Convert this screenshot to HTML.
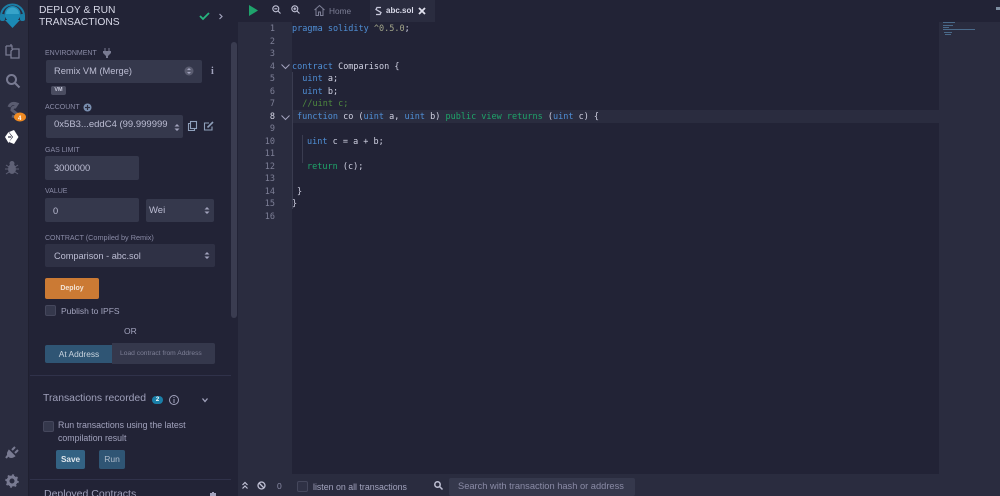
<!DOCTYPE html>
<html><head><meta charset="utf-8"><style>
html,body{margin:0;padding:0;width:1000px;height:496px;overflow:hidden;background:#222336}
body{position:relative;font-family:"Liberation Sans",sans-serif;color:#a2a3bd}
.a{position:absolute;white-space:nowrap}
.box{position:absolute;background:#35384c;border-radius:2px}
.l{position:absolute;font-size:7px;color:#8a8ba6;white-space:nowrap;line-height:10px}
.t{position:absolute;font-size:9.300px;color:#bcbdd3;white-space:nowrap;line-height:12px}
.code{position:absolute;left:292px;font:8.5px/12.53px "DejaVu Sans Mono","Liberation Mono",monospace;color:#d0d1e2;white-space:pre}
.n{position:absolute;left:240px;width:35px;text-align:right;font:8.5px/12.53px "DejaVu Sans Mono","Liberation Mono",monospace;color:#7d7f96}
.k{color:#4f8fd6}.g{color:#1fa56a}.c{color:#4f8a3f}.o{color:#a3a68a}
svg{position:absolute;overflow:visible}
</style></head><body>
<!-- icon panel -->
<div class="a" style="left:0;top:0;width:28px;height:496px;background:#2a2c3f;border-right:1px solid #1f2030"></div>
<svg style="left:0;top:0" width="28" height="30"><path d="M1 16 A11 11 0 0 1 24 16" fill="none" stroke="#1b7fa8" stroke-width="2"/><circle cx="12.5" cy="14" r="8" fill="#1b8ab5"/><path d="M6 14 A6.500 6.500 0 0 1 19 14 Z" fill="#37a3c9"/><path d="M5 20 H20 L12.500 28 Z" fill="#1b8ab5"/><rect x="0" y="14" width="5" height="7" rx="2" fill="#1b7fa8"/><rect x="20" y="14" width="5" height="7" rx="2" fill="#1b7fa8"/></svg>
<svg style="left:5px;top:43px" width="16" height="16" fill="none" stroke="#797b92" stroke-width="1.300"><path d="M1 3 H7 V6 M6 1 V3 M1 3 V12 H6"/><path d="M8 6 H14 V15 H6 V8 Z"/></svg>
<svg style="left:5px;top:73px" width="16" height="16" fill="none" stroke="#797b92" stroke-width="2"><circle cx="6.500" cy="6.500" r="4.500"/><path d="M10 10 L14.500 14.500"/></svg>
<svg style="left:7px;top:101px" width="20" height="24"><path d="M2 6 Q4 1 10 3 L8 6 Q5 6 5 9 L10 13 Q11 17 5 15" fill="none" stroke="#5a5c70" stroke-width="3"/><ellipse cx="13" cy="16" rx="6" ry="4.500" fill="#ef8a22"/><text x="11" y="19" font-size="6" font-weight="700" fill="#fff" font-family="Liberation Sans">4</text></svg>
<svg style="left:4px;top:129px" width="16" height="18"><path d="M5 3 L10 1 L14.500 8 L10 15 L5 13 L9 8 Z" fill="#fff"/><path d="M1 8 L4.500 3 L8 8 L4.500 14 Z" fill="#fff"/><path d="M4 8 L7 8" stroke="#2a2c3f" stroke-width="1.200"/></svg>
<svg style="left:5px;top:160px" width="14" height="15" fill="#5f6176"><ellipse cx="7" cy="9" rx="4" ry="5"/><circle cx="7" cy="3.500" r="2.500"/><path d="M1 5 L4 7 M13 5 L10 7 M0 9 H3 M14 9 H11 M1 14 L4 12 M13 14 L10 12" stroke="#5f6176" stroke-width="1"/></svg>
<svg style="left:5px;top:445px" width="14" height="14" fill="none" stroke="#797b92" stroke-width="2"><path d="M1 13 L4 9" /><path d="M4 6 L9 11 Q6 13 4 11 Q2 9 4 6 Z" fill="#797b92"/><path d="M7 5 L10 2 M10 8 L13 5" /></svg>
<svg style="left:5px;top:474px" width="14" height="14"><circle cx="7" cy="7" r="4" fill="none" stroke="#797b92" stroke-width="3"/><circle cx="7" cy="7" r="6" fill="none" stroke="#797b92" stroke-width="1.500" stroke-dasharray="2 2.700"/></svg>

<!-- side panel -->
<div class="a" style="left:39px;top:5px;font-size:10.300px;line-height:12px;color:#d8d9e8">DEPLOY &amp; RUN<br>TRANSACTIONS</div>
<svg style="left:199px;top:12px" width="24" height="9" fill="none"><path d="M1 4 L4 7 L10 1" stroke="#26b57e" stroke-width="1.800"/><path d="M20.500 2 L23 4.500 L20.500 7" stroke="#a2a3bd" stroke-width="1.200"/></svg>
<div class="a" style="left:231px;top:42px;width:6px;height:276px;background:#3a3c50;border-radius:3px"></div>

<div class="l" style="left:45px;top:49px">ENVIRONMENT</div>
<svg style="left:103px;top:48px" width="9" height="10" fill="#797b92"><path d="M2 0 V3 M6 0 V3" stroke="#797b92"/><path d="M0 3 H8 V5 L5 8 V10 H3 V8 L0 5 Z"/></svg>
<div class="box" style="left:46px;top:60px;width:156px;height:23px"></div>
<div class="t" style="left:54px;top:65px">Remix VM (Merge)</div>
<svg style="left:184px;top:66px" width="10" height="10"><circle cx="5" cy="5" r="4.500" fill="#5a5c70"/><path d="M3 4 L5 2 L7 4 Z M3 6 L5 8 L7 6 Z" fill="#a2a3bd"/></svg>
<div class="a" style="left:211px;top:66px;font:700 10px/12px 'Liberation Serif',serif;color:#a2a3bd">i</div>
<div class="a" style="left:51px;top:86px;width:15px;height:9px;background:#4a4c60;border-radius:2px;font:700 5.500px/9px 'Liberation Sans',sans-serif;color:#c8c9dc;text-align:center">VM</div>

<div class="l" style="left:45px;top:103px">ACCOUNT</div>
<svg style="left:83px;top:103px" width="9" height="9"><circle cx="4.500" cy="4.500" r="4" fill="#7a8fb0"/><path d="M4.500 2 V7 M2 4.500 H7" stroke="#2a2c3f" stroke-width="1.200"/></svg>
<div class="box" style="left:46px;top:115px;width:137px;height:23px"></div>
<div class="t" style="left:54px;top:119px;width:115px;overflow:hidden;font-size:9.500px">0x5B3...eddC4 (99.999999</div>
<svg style="left:174px;top:123px" width="6" height="9" fill="#a2a3bd"><path d="M0.500 3.500 L3 1 L5.500 3.500 Z M0.500 5.500 L3 8 L5.500 5.500 Z"/></svg>
<svg style="left:188px;top:121px" width="9" height="10" fill="none" stroke="#8fa0bb" stroke-width="1.100"><rect x="2.500" y="0.500" width="6" height="7"/><path d="M2.500 2.500 H0.500 V9.500 H6.500 V7.500"/></svg>
<svg style="left:204px;top:121px" width="10" height="10" fill="none" stroke="#8fa0bb" stroke-width="1.100"><path d="M8 5.500 V9 H0.500 V2 H5"/><path d="M3.500 6.500 L9 1" stroke-width="1.600"/></svg>

<div class="l" style="left:45px;top:146px">GAS LIMIT</div>
<div class="box" style="left:45px;top:156px;width:94px;height:24px"></div>
<div class="t" style="left:54px;top:162px">3000000</div>

<div class="l" style="left:45px;top:187px">VALUE</div>
<div class="box" style="left:45px;top:198px;width:94px;height:24px"></div>
<div class="t" style="left:53px;top:205px">0</div>
<div class="box" style="left:146px;top:199px;width:68px;height:23px"></div>
<div class="t" style="left:149px;top:205px;font-size:9.500px">Wei</div>
<svg style="left:204px;top:206px" width="6" height="9" fill="#a2a3bd"><path d="M0.500 3.500 L3 1 L5.500 3.500 Z M0.500 5.500 L3 8 L5.500 5.500 Z"/></svg>

<div class="l" style="left:45px;top:233px;font-size:7px">CONTRACT <span style="font-size:7.300px">(Compiled by Remix)</span></div>
<div class="box" style="left:45px;top:244px;width:170px;height:23px;background:#2f3145"></div>
<div class="t" style="left:54px;top:250px;font-size:9.200px">Comparison - abc.sol</div>
<svg style="left:204px;top:251px" width="6" height="9" fill="#a2a3bd"><path d="M0.500 3.500 L3 1 L5.500 3.500 Z M0.500 5.500 L3 8 L5.500 5.500 Z"/></svg>

<div class="a" style="left:45px;top:278px;width:54px;height:21px;background:#cb7a34;border-radius:2px;font:700 7px/21px 'Liberation Sans',sans-serif;color:#f3e3d3;text-align:center">Deploy</div>
<div class="a" style="left:45px;top:305px;width:9px;height:9px;background:#35384c;border:1px solid #45475c;border-radius:2px"></div>
<div class="t" style="left:61px;top:305px;font-size:8.500px;color:#a2a3bd">Publish to IPFS</div>
<div class="t" style="left:124px;top:325px;font-size:8.500px;color:#a2a3bd">OR</div>

<div class="a" style="left:45px;top:345px;width:68px;height:18px;background:#2f5574;border-radius:2px 0 0 2px;font:8.400px/18px 'Liberation Sans',sans-serif;color:#c8d3de;text-align:center">At Address</div>
<div class="a" style="left:112px;top:343px;width:103px;height:21px;background:#35384c;border-radius:0 2px 2px 0;font:6.700px/21px 'Liberation Sans',sans-serif;color:#7d7f96;text-indent:8px">Load contract from Address</div>

<div class="a" style="left:30px;top:375px;width:201px;height:1px;background:#30324a"></div>
<div class="a" style="left:43px;top:393px;font-size:10.400px;line-height:12px;color:#9fa0ba">Transactions recorded</div>
<div class="a" style="left:152px;top:396px;width:11px;height:8px;background:#1a7fa8;border-radius:5px;font:700 6px/8px 'Liberation Sans',sans-serif;color:#fff;text-align:center">2</div>
<svg style="left:169px;top:395px" width="11" height="11" fill="none" stroke="#a2a3bd"><circle cx="5" cy="5" r="4.500"/><path d="M5 4 V8 M5 2 V3"/></svg>
<svg style="left:202px;top:398px" width="6" height="5" fill="none" stroke="#a2a3bd" stroke-width="1.300"><path d="M0.500 0.500 L3 3.500 L5.500 0.500"/></svg>

<div class="a" style="left:43px;top:421px;width:9px;height:9px;background:#35384c;border:1px solid #45475c;border-radius:2px"></div>
<div class="t" style="left:58px;top:419px;font-size:8.800px;line-height:13px;color:#a2a3bd">Run transactions using the latest<br>compilation result</div>
<div class="a" style="left:56px;top:450px;width:29px;height:19px;background:#336283;border-radius:2px;font:700 8.200px/19px 'Liberation Sans',sans-serif;color:#e0e6ec;text-align:center">Save</div>
<div class="a" style="left:99px;top:450px;width:26px;height:19px;background:#2f5574;border-radius:2px;font:8.500px/18px 'Liberation Sans',sans-serif;color:#b0bccb;text-align:center">Run</div>
<div class="a" style="left:30px;top:479px;width:201px;height:1px;background:#30324a"></div>
<div class="a" style="left:44px;top:488px;font-size:10.500px;line-height:12px;color:#9fa0ba">Deployed Contracts</div>
<svg style="left:209px;top:492px" width="8" height="4" fill="#a2a3bd"><path d="M1 1 H7 V4 H1 Z M3 0 H5 V1 H3 Z"/></svg>

<!-- top bar -->
<div class="a" style="left:238px;top:0;width:762px;height:22px;background:#222336"></div>
<svg style="left:249px;top:5px" width="9" height="11"><path d="M0 0 L9 5.500 L0 11 Z" fill="#1fa36c"/></svg>
<svg style="left:272px;top:5px" width="9" height="9" fill="none" stroke="#c0c1d5" stroke-width="1.100"><circle cx="3.800" cy="3.800" r="3"/><path d="M6 6 L8.500 8.500 M2.300 3.800 H5.300"/></svg>
<svg style="left:291px;top:5px" width="9" height="9" fill="none" stroke="#c0c1d5" stroke-width="1.100"><circle cx="3.800" cy="3.800" r="3"/><path d="M6 6 L8.500 8.500 M2.300 3.800 H5.300 M3.800 2.300 V5.300"/></svg>
<svg style="left:314px;top:5px" width="11" height="11" fill="none" stroke="#7d7f96"><path d="M0.500 5 L5.500 0.500 L10.500 5 M2 4 V10.500 H4.500 V7 H6.500 V10.500 H9 V4"/></svg>
<div class="a" style="left:329px;top:5px;font-size:8.300px;line-height:12px;color:#7d7f96">Home</div>
<div class="a" style="left:370px;top:0;width:65px;height:22px;background:#2a2c3f"></div>
<svg style="left:375px;top:6px" width="7" height="10" fill="none" stroke="#c8c9dc" stroke-width="1.300"><path d="M6 1.500 H2 L1 3.500 L6 6.500 L5 8.500 H1"/></svg>
<div class="a" style="left:386px;top:5px;font:700 8px/12px 'Liberation Sans',sans-serif;color:#d8d9e8">abc.sol</div>
<svg style="left:418px;top:7px" width="8" height="8" stroke="#e0e1ee" stroke-width="1.800"><path d="M1 1 L7 7 M7 1 L1 7"/></svg>
<div class="a" style="left:996px;top:7px;width:4px;height:3px;background:#7d8da0"></div>

<!-- editor -->
<div class="a" style="left:238px;top:22px;width:54px;height:452px;background:#2a2c3f"></div>
<div class="a" style="left:292px;top:22px;width:647px;height:452px;background:#222336"></div>
<div class="a" style="left:939px;top:22px;width:61px;height:452px;background:#2a2c3f"></div>
<div class="a" style="left:292px;top:110px;width:647px;height:12.500px;background:#2a2c3f"></div>
<div class="a" style="left:292px;top:72px;width:1px;height:137px;background:#3a3c50"></div>
<div class="a" style="left:302px;top:135px;width:1px;height:28px;background:#3a3c50"></div>

<div class="n" style="top:23px">1</div><div class="n" style="top:35.500px">2</div><div class="n" style="top:48px">3</div><div class="n" style="top:60.600px">4</div><div class="n" style="top:73.100px">5</div><div class="n" style="top:85.700px">6</div><div class="n" style="top:98.200px">7</div><div class="n" style="top:110.700px;color:#d8d9e8">8</div><div class="n" style="top:123.200px">9</div><div class="n" style="top:135.800px">10</div><div class="n" style="top:148.300px">11</div><div class="n" style="top:160.800px">12</div><div class="n" style="top:173.400px">13</div><div class="n" style="top:185.900px">14</div><div class="n" style="top:198.400px">15</div><div class="n" style="top:211px">16</div>
<svg style="left:281px;top:64px" width="9" height="5" fill="none" stroke="#a2a3bd"><path d="M0.500 0.500 L4.500 4.500 L8.500 0.500"/></svg>
<svg style="left:281px;top:115px" width="9" height="5" fill="none" stroke="#a2a3bd"><path d="M0.500 0.500 L4.500 4.500 L8.500 0.500"/></svg>

<div class="code" style="top:23px"><span class="k">pragma solidity</span> <span class="o">^0.5.0</span>;</div>
<div class="code" style="top:60.600px"><span class="k">contract</span> Comparison {</div>
<div class="code" style="top:73.100px">  <span class="k">uint</span> a;</div>
<div class="code" style="top:85.700px">  <span class="k">uint</span> b;</div>
<div class="code" style="top:98.200px">  <span class="c">//uint c;</span></div>
<div class="code" style="top:110.700px;left:297px"><span class="k">function</span> co (<span class="k">uint</span> a, <span class="k">uint</span> b) <span class="g">public view returns</span> (<span class="k">uint</span> c) {</div>
<div class="code" style="top:135.800px;left:307px"><span class="k">uint</span> c = a + b;</div>
<div class="code" style="top:160.800px;left:307px"><span class="g">return</span> (c);</div>
<div class="code" style="top:185.900px;left:297px">}</div>
<div class="code" style="top:198.400px">}</div>

<!-- minimap -->
<div class="a" style="left:943px;top:22px;width:12px;height:1px;background:#4a6a8a"></div>
<div class="a" style="left:943px;top:25px;width:10px;height:1px;background:#4a6a8a"></div>
<div class="a" style="left:943px;top:27px;width:6px;height:1px;background:#4a6a8a"></div>
<div class="a" style="left:943px;top:29px;width:32px;height:1px;background:#4a6a8a"></div>
<div class="a" style="left:944px;top:32px;width:8px;height:1px;background:#4a6a8a"></div>
<div class="a" style="left:945px;top:34px;width:6px;height:1px;background:#4a6a8a"></div>

<!-- terminal bar -->
<div class="a" style="left:238px;top:474px;width:762px;height:22px;background:#2a2c3f"></div>
<svg style="left:242px;top:482px" width="6" height="7" fill="none" stroke="#c0c1d5" stroke-width="1.200"><path d="M0.500 3 L3 0.500 L5.500 3 M0.500 6.500 L3 4 L5.500 6.500"/></svg>
<svg style="left:257px;top:481px" width="9" height="9" fill="none" stroke="#c0c1d5" stroke-width="1.300"><circle cx="4.500" cy="4.500" r="3.500"/><path d="M2 2 L7 7"/></svg>
<div class="a" style="left:277px;top:481px;font-size:8.500px;line-height:10px;color:#8a8ba6">0</div>
<div class="a" style="left:297px;top:481px;width:9px;height:9px;background:#2f3145;border:1px solid #45475c;border-radius:2px"></div>
<div class="a" style="left:313px;top:482px;font-size:8.800px;line-height:11px;color:#a2a3bd">listen on all transactions</div>
<svg style="left:434px;top:481px" width="9" height="9" fill="none" stroke="#c0c1d5" stroke-width="1.500"><circle cx="3.500" cy="3.500" r="2.700"/><path d="M5.500 5.500 L8.500 8.500"/></svg>
<div class="a" style="left:449px;top:478px;width:186px;height:18px;background:#35384c;border-radius:2px;font-size:9.300px;line-height:17px;color:#8a8ba6;text-indent:9px">Search with transaction hash or address</div>
</body></html>
